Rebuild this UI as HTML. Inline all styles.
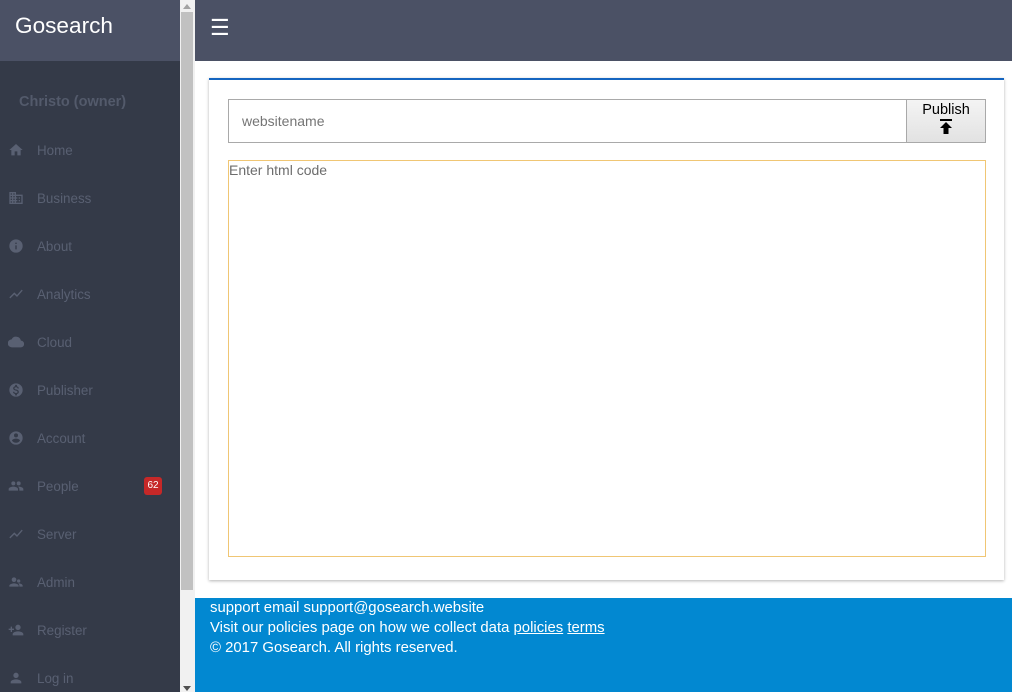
<!DOCTYPE html>
<html><head><meta charset="utf-8"><style>
*{margin:0;padding:0;box-sizing:border-box}
body{width:1012px;height:692px;overflow:hidden;font-family:"Liberation Sans",sans-serif;background:#fff;position:relative}
#side{position:absolute;left:0;top:0;width:180px;height:692px;background:#343a48}
#brand{height:61px;background:#4b5165;color:#fff;font-size:22.6px;padding:13px 0 0 15px}
#user{position:absolute;left:19px;top:94px;color:#535a6b;font-weight:bold;font-size:14.5px}
.it{position:absolute;left:0;width:180px;height:20px;color:#596072;font-size:13.4px}
.it svg{position:absolute;left:8px;top:2px;width:16px;height:16px;fill:#596072}
.it span{position:absolute;left:37px;top:3px}
.badge{position:absolute;left:144px;top:1px;width:18px;height:18px;background:#c62828;border-radius:3px;color:#fff;font-size:10px;text-align:center;line-height:18px}
#sb{position:absolute;left:180px;top:0;width:15px;height:692px;background:#f1f1f1}
#thumb{position:absolute;left:181px;top:12px;width:12px;height:578px;background:#c1c1c1}
#top{position:absolute;left:195px;top:0;width:817px;height:61px;background:#4b5165;color:#fff;font-size:22px;padding:15px 0 0 15px}
#card{position:absolute;left:209px;top:78px;width:795px;height:502px;border-top:2px solid #1565c0;box-shadow:0 1px 3px rgba(0,0,0,.3);background:#fff}
#inp{position:absolute;left:228px;top:99px;width:679px;height:44px;border:1px solid #a9a9a9;color:#757575;font-size:14px;padding:13px 0 0 13px}
#btn{position:absolute;left:906px;top:99px;width:80px;height:44px;border:1px solid #a9a9a9;background:linear-gradient(#f4f4f4,#e2e2e2);font-size:14.5px;text-align:center;padding-top:2px;line-height:16px}
#ta{position:absolute;left:228px;top:160px;width:758px;height:397px;border:1px solid #f0c674;color:#6d6d6d;font-size:14px;padding:1px 0 0 0}
#foot{position:absolute;left:195px;top:598px;width:817px;height:94px;background:#0288d1;color:#fff;font-size:14.9px;line-height:20px;padding:0 0 0 15px}
#foot u{text-decoration:underline}
</style></head><body>
<div id="side">
<div id="brand">Gosearch</div>
<div id="user">Christo (owner)</div>
<div class="it" style="top:140px"><svg viewBox="0 0 24 24"><path d="M10 20v-6h4v6h5v-8h3L12 3 2 12h3v8z"/></svg><span>Home</span></div>
<div class="it" style="top:188px"><svg viewBox="0 0 24 24"><path d="M12 7V3H2v18h20V7H12zM6 19H4v-2h2v2zm0-4H4v-2h2v2zm0-4H4V9h2v2zm0-4H4V5h2v2zm4 12H8v-2h2v2zm0-4H8v-2h2v2zm0-4H8V9h2v2zm0-4H8V5h2v2zm10 12h-8v-2h2v-2h-2v-2h2v-2h-2V9h8v10zm-2-8h-2v2h2v-2zm0 4h-2v2h2v-2z"/></svg><span>Business</span></div>
<div class="it" style="top:236px"><svg viewBox="0 0 24 24"><path d="M12 2a10 10 0 100 20 10 10 0 000-20zm1 15h-2v-6h2v6zm0-8h-2V7h2v2z"/></svg><span>About</span></div>
<div class="it" style="top:284px"><svg viewBox="0 0 24 24"><path d="M3.5 18.5l6-6 4 4L22 6.9l-1.4-1.4-7.1 8-4-4L2 17z"/></svg><span>Analytics</span></div>
<div class="it" style="top:332px"><svg viewBox="0 0 24 24"><path d="M19.4 10A7.5 7.5 0 005.4 8 6 6 0 006 20h13a5 5 0 00.4-10z"/></svg><span>Cloud</span></div>
<div class="it" style="top:380px"><svg viewBox="0 0 24 24"><path d="M12 2a10 10 0 100 20 10 10 0 000-20zm1.4 16.1V20h-2.7v-1.9c-1.7-.4-3.2-1.5-3.3-3.4h2c.1 1 .8 1.8 2.6 1.8 1.9 0 2.3-1 2.3-1.5 0-.8-.4-1.5-2.6-2-2.4-.6-4-1.6-4-3.6 0-1.6 1.3-2.7 3-3.1V4.4h2.7v1.9c1.9.5 2.8 1.9 2.9 3.4h-2c-.1-1.1-.6-1.8-2.2-1.8-1.5 0-2.4.7-2.4 1.6 0 .8.6 1.3 2.6 1.8s4 1.3 4 3.7c0 1.7-1.3 2.7-2.9 3.1z"/></svg><span>Publisher</span></div>
<div class="it" style="top:428px"><svg viewBox="0 0 24 24"><path d="M12 2a10 10 0 100 20 10 10 0 000-20zm0 3a3 3 0 110 6 3 3 0 010-6zm0 14.2a7.2 7.2 0 01-6-3.2c0-2 4-3.1 6-3.1s6 1.1 6 3.1a7.2 7.2 0 01-6 3.2z"/></svg><span>Account</span></div>
<div class="it" style="top:476px"><svg viewBox="0 0 24 24"><path d="M16 11a3 3 0 100-6 3 3 0 000 6zm-8 0a3 3 0 100-6 3 3 0 000 6zm0 2c-2.3 0-7 1.2-7 3.5V19h14v-2.5C15 14.2 10.3 13 8 13zm8 0c-.3 0-.6 0-1 .1 1.2.8 2 2 2 3.4V19h6v-2.5c0-2.3-4.7-3.5-7-3.5z"/></svg><span>People</span><div class="badge">62</div></div>
<div class="it" style="top:524px"><svg viewBox="0 0 24 24"><path d="M3.5 18.5l6-6 4 4L22 6.9l-1.4-1.4-7.1 8-4-4L2 17z"/></svg><span>Server</span></div>
<div class="it" style="top:572px"><svg viewBox="0 0 24 24"><path d="M9 12a3.5 3.5 0 100-7 3.5 3.5 0 000 7zm7 1a2.5 2.5 0 100-5 2.5 2.5 0 000 5zM9 14c-2.3 0-7 1.2-7 3.5V19h14v-1.5C16 15.2 11.3 14 9 14zm7 0c-.3 0-.6 0-.9.1 1 .7 1.9 1.7 1.9 3.4V19h5v-1.5c0-2.3-3.7-3.5-6-3.5z"/></svg><span>Admin</span></div>
<div class="it" style="top:620px"><svg viewBox="0 0 24 24"><path d="M15 12a4 4 0 100-8 4 4 0 000 8zm-9-2V7H4v3H1v2h3v3h2v-3h3v-2H6zm9 4c-2.7 0-8 1.3-8 4v2h16v-2c0-2.7-5.3-4-8-4z"/></svg><span>Register</span></div>
<div class="it" style="top:668px"><svg viewBox="0 0 24 24"><path d="M12 12a4 4 0 100-8 4 4 0 000 8zm0 2c-2.7 0-8 1.3-8 4v2h16v-2c0-2.7-5.3-4-8-4z"/></svg><span>Log in</span></div>
</div>
<div id="sb"></div><div id="thumb"></div>
<div style="position:absolute;left:183px;top:4px;width:0;height:0;border-left:4px solid transparent;border-right:4px solid transparent;border-bottom:5px solid #a3a3a3"></div>
<div style="position:absolute;left:183px;top:686px;width:0;height:0;border-left:4px solid transparent;border-right:4px solid transparent;border-top:5px solid #505050"></div>
<div id="top">☰</div>
<div id="card"></div>
<div id="inp">websitename</div>
<div id="btn">Publish<br><svg width="16" height="17" viewBox="0 0 16 17"><rect x="2" y="1" width="12" height="2"/><path d="M8 4L2 10h3.5v6h5v-6H14z"/></svg></div>
<div id="ta">Enter html code</div>
<div id="foot">support email support@gosearch.website<br>Visit our policies page on how we collect data <u>policies</u> <u>terms</u><br>© 2017 Gosearch. All rights reserved.</div>
</body></html>
